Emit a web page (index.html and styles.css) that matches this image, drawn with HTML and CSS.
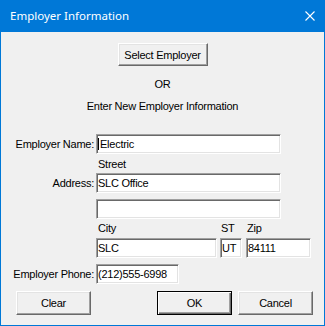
FILE: index.html
```html
<!DOCTYPE html>
<html lang="en">
<head>
    <meta charset="UTF-8">
    <meta name="viewport" content="width=device-width, initial-scale=1.0">
    <title>Employer Information</title>
    <link rel="stylesheet" href="styles.css">
</head>
<body>
    <div class="window">
        <!-- Title bar -->
        <div class="titlebar">
            <span class="title">Employer Information</span>
            <svg class="close" width="10" height="10" viewBox="0 0 10 10">
                <path d="M0.5 0.5 L9.5 9.5 M9.5 0.5 L0.5 9.5" stroke="#fff" stroke-width="1.1" fill="none"/>
            </svg>
        </div>

        <div class="content">
            <div class="center-row">
                <button class="btn btn-select">Select Employer</button>
            </div>
            <div class="caption or">OR</div>
            <div class="caption enter">Enter New Employer Information</div>

            <!-- Employer fields -->
            <div class="row row-name">
                <label class="lbl">Employer Name:</label>
                <span class="caret-wrap">
                    <input class="field w-long" type="text" value="Electric">
                    <span class="caret"></span>
                </span>
            </div>

            <div class="row row-street">
                <span class="lbl"></span>
                <span class="sub">Street</span>
            </div>
            <div class="row row-addr">
                <label class="lbl">Address:</label>
                <input class="field w-long" type="text" value="SLC Office">
            </div>
            <div class="row row-addr2">
                <span class="lbl"></span>
                <input class="field w-long" type="text" value="">
            </div>

            <div class="row row-citylbl">
                <span class="lbl"></span>
                <span class="sub w-city">City</span>
                <span class="sub w-st">ST</span>
                <span class="sub w-zip">Zip</span>
            </div>
            <div class="row row-city">
                <span class="lbl"></span>
                <input class="field w-city" type="text" value="SLC">
                <input class="field w-st" type="text" value="UT">
                <input class="field w-zip" type="text" value="84111">
            </div>

            <div class="row row-phone">
                <label class="lbl">Employer Phone:</label>
                <input class="field w-phone" type="text" value="(212)555-6998">
            </div>

            <!-- Dialog buttons -->
            <div class="actions">
                <button class="btn btn-action">Clear</button>
                <div class="spacer"></div>
                <button class="btn btn-action btn-default">OK</button>
                <button class="btn btn-action">Cancel</button>
            </div>
        </div>
    </div>
</body>
</html>
```

FILE: styles.css
```css
body {
    margin: 0;
    background-color: #f0f0f0;
    font-family: "Liberation Sans", Arial, sans-serif;
    font-size: 11px;
    color: #000;
}

.window {
    width: 325px;
    height: 326px;
    box-sizing: border-box;
    border: 1px solid #0078d7;
    border-top: none;
    background-color: #f0f0f0;
}

/* Title bar */
.titlebar {
    height: 31px;
    margin: 0 -1px;
    background-color: #0078d7;
    display: flex;
    align-items: center;
    justify-content: space-between;
    padding: 0 10px 1px 10px;
}

.title {
    font-family: "Noto Sans", sans-serif;
    font-size: 11.5px;
    color: #fff;
}

.close {
    display: block;
}

.content {
    padding-top: 11px;
    letter-spacing: -0.25px;
}

.center-row {
    display: flex;
    justify-content: center;
}

/* Buttons */
.btn {
    font-family: "Liberation Sans", Arial, sans-serif;
    font-size: 11px;
    letter-spacing: -0.25px;
    color: #000;
    background-color: #f0f0f0;
    box-sizing: border-box;
    border-top: 1px solid #fff;
    border-left: 1px solid #fff;
    border-right: 1px solid #696969;
    border-bottom: 1px solid #696969;
    box-shadow: inset -1px -1px #a0a0a0, inset 1px 1px #e3e3e3;
    padding: 0;
    margin: 0;
}

.btn-select {
    width: 90px;
    height: 23px;
}

.btn-action {
    width: 75px;
    height: 24px;
}

.btn-default {
    border: 1px solid #000;
    box-shadow: inset 1px 1px #fff, inset -1px -1px #696969, inset -2px -2px #a0a0a0;
}

.caption {
    text-align: center;
    line-height: 13px;
}

.or {
    margin-top: 12px;
}

.enter {
    margin-top: 9px;
}

/* Form rows */
.row {
    display: flex;
    align-items: center;
}

.lbl {
    width: 93px;
    padding-right: 2px;
    text-align: right;
    flex-shrink: 0;
}

.field {
    height: 20px;
    box-sizing: border-box;
    margin: 0;
    padding: 0 1px;
    font-family: "Liberation Sans", Arial, sans-serif;
    font-size: 11px;
    letter-spacing: -0.25px;
    color: #000;
    background-color: #fff;
    border-top: 1px solid #a0a0a0;
    border-left: 1px solid #a0a0a0;
    border-right: 1px solid #fff;
    border-bottom: 1px solid #fff;
    box-shadow: inset 1px 1px #696969, inset -1px -1px #e3e3e3;
    outline: none;
}

.sub {
    line-height: 13px;
    padding-left: 2px;
    box-sizing: border-box;
}

.w-long { width: 185px; }
.w-city { width: 121px; margin-right: 3px; }
.w-st { width: 22px; margin-right: 4px; }
.w-zip { width: 65px; }
.w-phone { width: 83px; }

.row-name { margin-top: 21px; }
.row-street { margin-top: 4px; }
.row-addr { margin-top: 2px; }
.row-addr2 { margin-top: 6px; }
.row-citylbl { margin-top: 3px; }
.row-city { margin-top: 3px; }
.row-phone { margin-top: 6px; }

.sub.w-st { padding-left: 1px; }
.sub.w-zip { padding-left: 1px; }

/* Text caret shown over the first field */
.caret-wrap {
    position: relative;
    display: block;
}

.caret-wrap .field {
    padding-left: 3px;
    display: block;
}

.caret {
    position: absolute;
    left: 2px;
    top: 4px;
    width: 1px;
    height: 12px;
    background-color: #000;
}

.actions {
    display: flex;
    margin-top: 7px;
    padding: 0 11px 0 15px;
}

.spacer {
    flex: 1;
}

.actions .btn-action + .btn-action {
    margin-left: 6px;
}
```
